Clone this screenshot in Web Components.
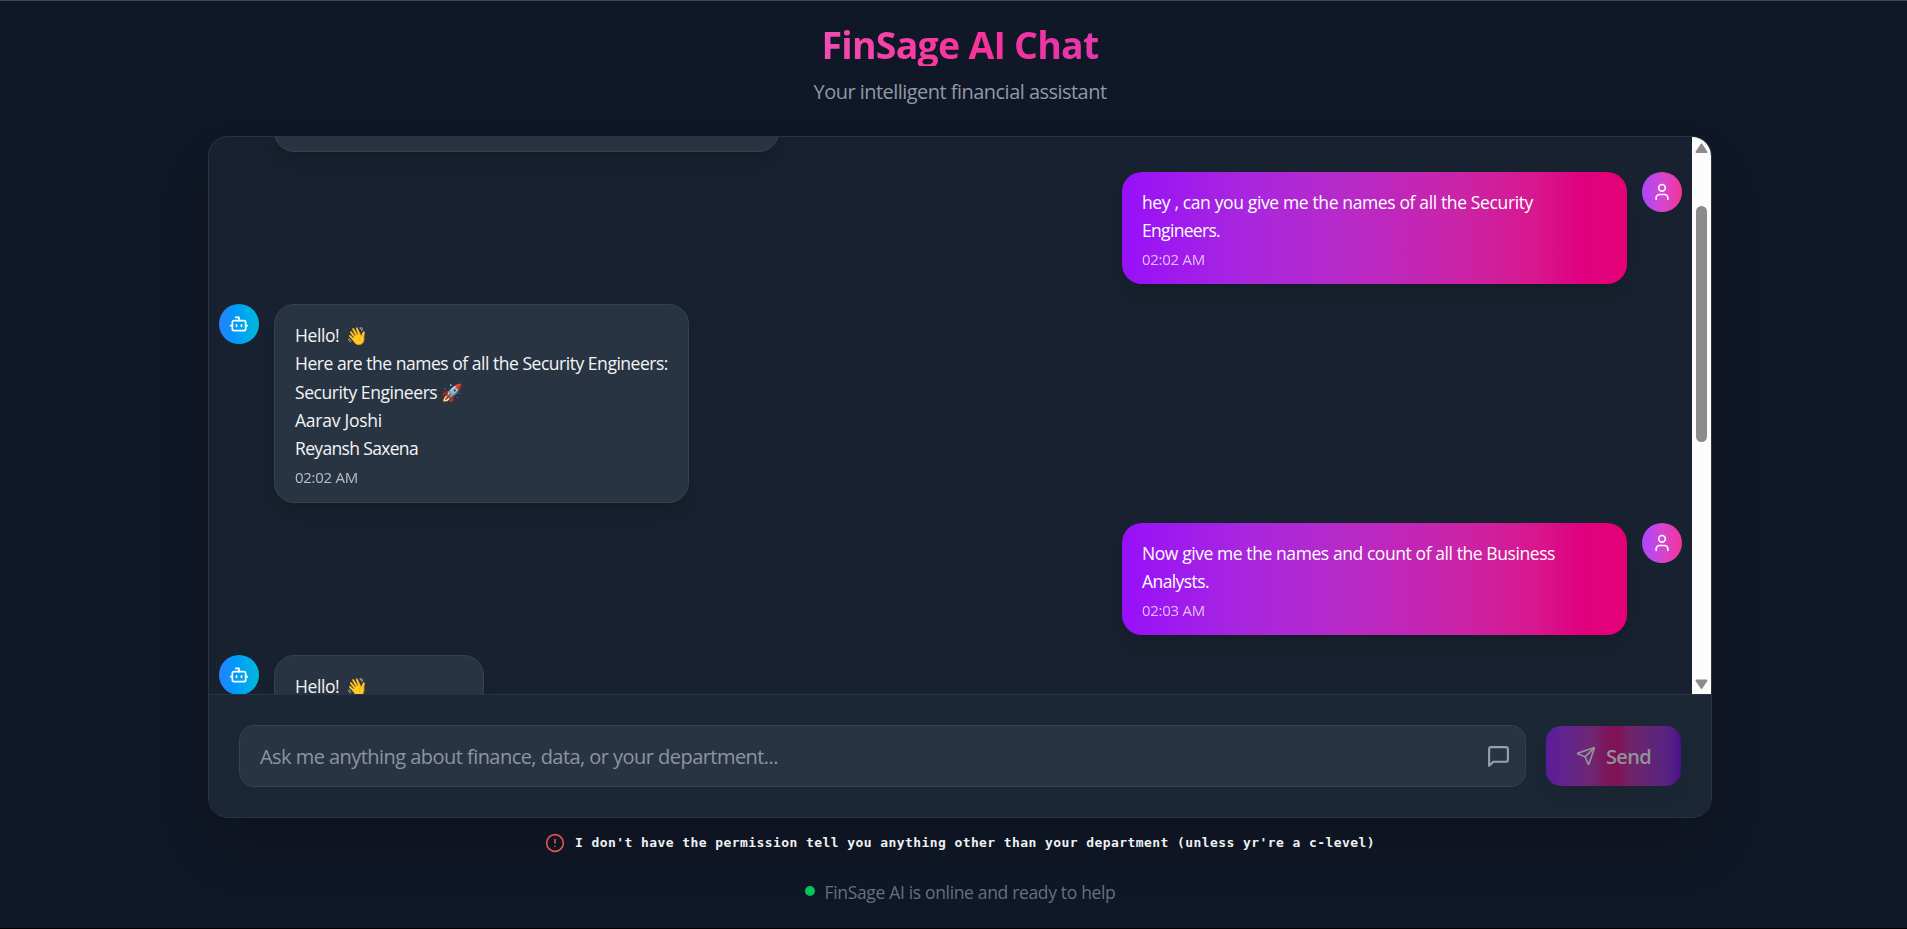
<!DOCTYPE html>
<html lang="en">
<head>
<meta charset="utf-8">
<title>FinSage AI Chat</title>
<style>
html,body{margin:0;height:100%;overflow:hidden;background:#101726}
body{font-family:"Open Sans","Noto Sans",sans-serif;color:#fff}
</style>
</head>
<body>
<finsage-app></finsage-app>
<script>
const define=(name,html,init)=>{
  const t=document.createElement('template');
  t.innerHTML=html;
  customElements.define(name,class extends HTMLElement{
    constructor(){super();this.attachShadow({mode:'open'}).append(t.content.cloneNode(true));}
    connectedCallback(){if(init)init.call(this,this.shadowRoot);}
  });
};

// One line of text, tracked so that it takes exactly the width given in the w attribute.
define('fit-text',`<style>:host{display:block;white-space:pre}span{display:inline-block}</style><span><slot></slot></span>`,function(r){
  const s=r.querySelector('span'),w=+this.getAttribute('w');
  if(!w)return;
  const n=[...this.textContent].length;
  const natural=s.getBoundingClientRect().width;
  s.style.letterSpacing=((w-natural)/n)+'px';
});

const ICONS={
  bot:'<path d="M12 8V4H8"/><rect width="16" height="12" x="4" y="8" rx="2"/><path d="M2 14h2M20 14h2M15 13v2M9 13v2"/>',
  user:'<path d="M19 21v-2a4 4 0 0 0-4-4H9a4 4 0 0 0-4 4v2"/><circle cx="12" cy="7" r="4"/>',
  send:'<path d="M14.536 21.686a.5.5 0 0 0 .937-.024l6.5-19a.496.496 0 0 0-.635-.635l-19 6.5a.5.5 0 0 0-.024.937l7.93 3.18a2 2 0 0 1 1.112 1.11z"/><path d="m21.854 2.147-10.94 10.939"/>',
  chat:'<path d="M21 15a2 2 0 0 1-2 2H7l-4 4V5a2 2 0 0 1 2-2h14a2 2 0 0 1 2 2z"/>',
  alert:'<circle cx="12" cy="12" r="10"/><path d="M12 8v4M12 16h.01"/>'
};
define('line-icon',`<style>:host{display:block;width:20px;height:20px;flex:none}svg{display:block;width:100%;height:100%}</style>`,function(r){
  const b=document.createElement('div');
  b.style.height='100%';
  b.innerHTML='<svg viewBox="0 0 24 24" fill="none" stroke="currentColor" stroke-width="2" stroke-linecap="round" stroke-linejoin="round">'+ICONS[this.getAttribute('name')]+'</svg>';
  r.append(b);
});

define('chat-avatar',`<style>
:host{display:flex;align-items:center;justify-content:center;width:40px;height:40px;border-radius:50%;flex:none;color:#fff;background:linear-gradient(90deg,#2b7fff,#0099fb 38%,#00a8ec 65%,#00b8db)}
:host([kind=user]){background:linear-gradient(90deg,#ad46ff,#d346d0 50%,#f6339a)}
</style><slot></slot>`);

define('chat-message',`<style>
:host{display:flex;gap:15px;align-items:flex-start}
:host([kind=user]){flex-direction:row-reverse}
.bubble{box-sizing:border-box;width:var(--w);min-height:var(--h,0);border-radius:20px;padding:16px 20px 14.4px;background:#293443;border:1px solid #364150;box-shadow:0 12px 19px -4px rgba(0,0,0,.1),0 5px 8px -5px rgba(0,0,0,.1);font-size:17.5px;line-height:28.4px;color:#f3f4f6}
:host([kind=user]) .bubble{border:0;color:#fff;background:linear-gradient(90deg,#9810fa,#a826df 24%,#b62acb 42%,#c126b6 57%,#cb23a5 68%,#d8178f 82%,#df0080 91%,#e60076)}
.time{margin-top:4.6px;font-size:15px;line-height:20px;opacity:.7}
</style><div class="bubble"><slot></slot><div class="time"><slot name="time"></slot></div></div><slot name="avatar"></slot>`,function(r){
  const a=r.querySelector('slot[name=avatar]'),b=r.querySelector('.bubble');
  b.before(a);
});

define('chat-scrollbar',`<style>
:host{display:flex;flex-direction:column;align-items:center;width:19px;flex:none;background:#fcfcfc;color:#8b8b8b}
svg{display:block;width:13px;height:11px;fill:currentColor;stroke:currentColor;stroke-width:2;stroke-linejoin:round}
.up{margin-top:6px}.thumb{margin-top:52px;width:11px;height:236px;border-radius:6px;background:#8b8b8b}.down{margin-top:auto;margin-bottom:4px}
</style><svg class="up" viewBox="0 0 13 11"><path d="M6.5 1.5 11.5 9H1.5z"/></svg><div class="thumb"></div><svg class="down" viewBox="0 0 13 11"><path d="M6.5 9 11.5 1.5H1.5z"/></svg>`);

define('chat-log',`<style>
:host{display:flex;height:557px;overflow:hidden}
.list{flex:1;display:flex;flex-direction:column;justify-content:flex-start;gap:20px;padding:0 10px;margin-top:-85px}
fit-text{height:28.4px}
.wave{word-spacing:3px}
</style>
<div class="list">
<chat-message style="--w:505px;--h:100px"><span slot="avatar" style="width:40px"></span></chat-message>
<chat-message kind="user" style="--w:505px"><chat-avatar kind="user" slot="avatar"><line-icon name="user"></line-icon></chat-avatar><fit-text w="391">hey , can you give me the names of all the Security</fit-text><fit-text w="78">Engineers.</fit-text><fit-text slot="time" style="height:20px" w="63">02:02 AM</fit-text></chat-message>
<chat-message style="--w:415px;--h:199px"><chat-avatar slot="avatar"><line-icon name="bot"></line-icon></chat-avatar><fit-text class="wave" w="73">Hello! 👋</fit-text><fit-text w="373">Here are the names of all the Security Engineers:</fit-text><fit-text w="168">Security Engineers 🚀</fit-text><fit-text w="87">Aarav Joshi</fit-text><fit-text w="123">Reyansh Saxena</fit-text><fit-text slot="time" style="height:20px" w="63">02:02 AM</fit-text></chat-message>
<chat-message kind="user" style="--w:505px"><chat-avatar kind="user" slot="avatar"><line-icon name="user"></line-icon></chat-avatar><fit-text w="413">Now give me the names and count of all the Business</fit-text><fit-text w="67">Analysts.</fit-text><fit-text slot="time" style="height:20px" w="63">02:03 AM</fit-text></chat-message>
<chat-message style="--w:210px;--h:199px"><chat-avatar slot="avatar"><line-icon name="bot"></line-icon></chat-avatar><fit-text class="wave" w="73">Hello! 👋</fit-text></chat-message>
</div>
<chat-scrollbar></chat-scrollbar>`);

define('chat-composer',`<style>
:host{display:flex;align-items:center;gap:20px;padding:30px;border-top:1px solid #283443;background:#1c2736}
.field{flex:1;box-sizing:border-box;height:62px;display:flex;align-items:center;justify-content:space-between;padding:0 14px 0 20px;border:1px solid #364150;border-radius:15px;background:#293443;color:#8b94a3;font-size:20px;line-height:30px}
.field line-icon{width:25px;height:25px;color:#99a1af}
fit-text{padding-top:2px}
.send{box-sizing:border-box;width:135px;height:60px;display:flex;align-items:center;gap:10px;padding:0 30px;border-radius:15px;color:#8e939b;font-size:20px;font-weight:600;line-height:30px;background:linear-gradient(90deg,#5b1d9c,#632688 18%,#702570 35%,#7f1358 47%,#7f1358 54%,#702467 62%,#602578 78%,#562282 91%,#4c1088);box-shadow:0 12px 19px -4px rgba(0,0,0,.08)}
</style>
<div class="field"><fit-text w="518">Ask me anything about finance, data, or your department...</fit-text><line-icon name="chat"></line-icon></div>
<div class="send"><line-icon name="send"></line-icon><fit-text w="45">Send</fit-text></div>`);

define('finsage-app',`<style>
:host{display:flex;flex-direction:column;box-sizing:border-box;width:1920px;height:929px;padding:20px 208px 0;border-top:1px solid #444648;border-bottom:1px solid #000;background:#101726}
header{display:flex;flex-direction:column;align-items:center;height:115px}
h1{margin:0;height:45px;line-height:47px;font-size:37.5px;font-weight:700;color:transparent;background:linear-gradient(90deg,#ef4eb2,#f8369d 45%,#f6339a 60%,#e437ae);-webkit-background-clip:text;background-clip:text}
header p{margin:11px 0 0;font-size:20px;line-height:30px;color:#8f99a9}
.card{box-sizing:border-box;height:682px;border:1px solid #283443;border-radius:20px;overflow:hidden;background:#18212f;box-shadow:0 31px 62px -15px rgba(0,0,0,.25)}
.note{display:flex;align-items:center;justify-content:center;gap:10px;height:20px;margin-top:15px}
.note fit-text{font:700 13px/20px "DejaVu Sans Mono",monospace;color:#f0f1f3}
.note line-icon{color:#e0525a}
.status{display:flex;align-items:center;justify-content:center;gap:10px;height:28px;margin-top:24px;color:#667080;font-size:17.5px;line-height:28px}
.status fit-text{padding-top:1px}
.dot{width:10px;height:10px;border-radius:50%;background:#00c45c}
</style>
<header><h1><fit-text w="277">FinSage AI Chat</fit-text></h1><p><fit-text w="293">Your intelligent financial assistant</fit-text></p></header>
<div class="card"><chat-log></chat-log><chat-composer></chat-composer></div>
<div class="note"><line-icon name="alert"></line-icon><fit-text w="800">I don't have the permission tell you anything other than your department (unless yr're a c-level)</fit-text></div>
<div class="status"><span class="dot"></span><fit-text w="291">FinSage AI is online and ready to help</fit-text></div>`);
</script>
</body>
</html>
